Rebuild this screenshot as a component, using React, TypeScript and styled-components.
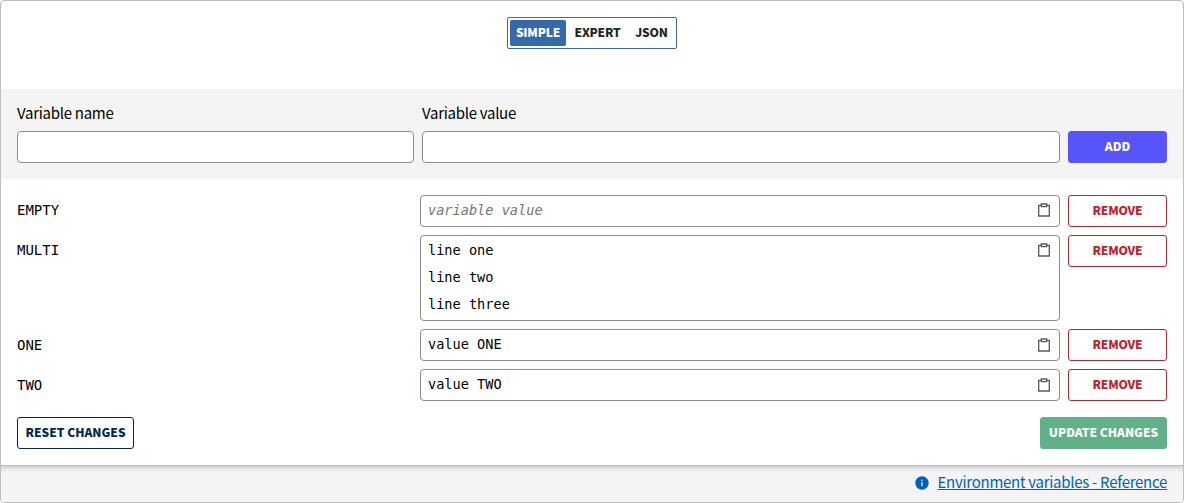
import React from "react";
import styled, { createGlobalStyle, css } from "styled-components";
import { RiClipboardLine, RiInformationFill } from "react-icons/ri";

const GlobalStyle = createGlobalStyle`
  *, *::before, *::after { box-sizing: border-box; }
  body {
    margin: 0;
    background: #fff;
    color: #000;
    font-family: "Noto Sans CJK JP", sans-serif;
    font-size: 15px;
    letter-spacing: -0.28px;
    line-height: 24px;
  }
`;

const Card = styled.section`
  display: flex;
  flex-direction: column;
  height: 503px;
  border: 1px solid #bfbfbf;
  border-radius: 4px;
  overflow: hidden;
  background: #fff;
`;

const Header = styled.div`
  display: flex;
  justify-content: center;
  height: 88px;
  padding-top: 16px;
`;

const Toggle = styled.div`
  display: flex;
  gap: 3px;
  height: 32px;
  width: 170px;
  padding: 2px;
  border: 1px solid #3569aa;
  border-radius: 2px;
`;

const ToggleItem = styled.button<{ $active?: boolean; $width: number }>`
  width: ${(p) => p.$width}px;
  padding: 0 0 2px;
  border: 0;
  border-radius: 2px;
  background: ${(p) => (p.$active ? "#3569aa" : "transparent")};
  color: ${(p) => (p.$active ? "#fff" : "#262626")};
  font: 900 12px/24px "Noto Sans CJK JP", sans-serif;
  letter-spacing: -0.2px;
  white-space: nowrap;
`;

const CreateForm = styled.div`
  display: flex;
  align-items: flex-end;
  gap: 8px;
  height: 90px;
  padding: 0 16px 16px;
  background: #f4f4f4;
`;

const Field = styled.label<{ $width: number }>`
  display: flex;
  flex-direction: column;
  gap: 6px;
  width: ${(p) => p.$width}px;
`;

const boxed = css`
  border: 1px solid #8c8c8c;
  border-radius: 4px;
  background: #fff;
`;

const TextInput = styled.input`
  ${boxed}
  width: 100%;
  height: 32px;
  padding: 0 8px;
`;

const tones = {
  primary: { bg: "#5754fb", fg: "#fff", border: "#5754fb", spacing: 0 },
  danger: { bg: "#fff", fg: "#be242d", border: "#be242d", spacing: -0.2 },
  neutral: { bg: "#fff", fg: "#012a51", border: "#012a51", spacing: 0 },
  success: { bg: "#60b187", fg: "#fff", border: "#60b187", spacing: 0 },
};

const Button = styled.button<{ $tone: keyof typeof tones; $width: number }>`
  flex: none;
  width: ${(p) => p.$width}px;
  height: 32px;
  padding: 0 0 2px;
  border: 1px solid ${(p) => tones[p.$tone].border};
  border-radius: 3px;
  background: ${(p) => tones[p.$tone].bg};
  color: ${(p) => tones[p.$tone].fg};
  font: 900 12px/28px "Noto Sans CJK JP", sans-serif;
  letter-spacing: ${(p) => tones[p.$tone].spacing}px;
  white-space: nowrap;
`;

const List = styled.div`
  display: flex;
  flex-direction: column;
  gap: 8px;
  padding: 16px 16px 0;
`;

const Row = styled.div`
  display: flex;
  align-items: flex-start;
  gap: 8px;
`;

const Name = styled.span`
  width: 395px;
  padding-top: 0.3px;
  font: 14px/31px "DejaVu Sans Mono", monospace;
  letter-spacing: 0;
`;

const ValueBox = styled.div`
  ${boxed}
  display: flex;
  width: 640px;
  padding-right: 7px;
`;

const ValueText = styled.textarea<{ $lines: number }>`
  flex: 1;
  display: block;
  height: ${(p) => (p.$lines - 1) * 27.2 + 30}px;
  margin: 0;
  padding: 1px 0 0 7px;
  border: 0;
  outline: 0;
  resize: none;
  overflow: hidden;
  background: transparent;
  color: #000;
  font: 13.6px/27px "DejaVu Sans Mono", monospace;
  letter-spacing: 0;

  &::placeholder {
    color: #757575;
    font-style: italic;
  }
`;

const CopyIcon = styled(RiClipboardLine)`
  flex: none;
  width: 16px;
  height: 16px;
  margin-top: 6.2px;
  color: #595959;
`;

const Actions = styled.div`
  display: flex;
  justify-content: space-between;
  padding: 15.6px 16px 0;
`;

const Footer = styled.footer`
  display: flex;
  align-items: center;
  justify-content: flex-end;
  gap: 8px;
  height: 37px;
  margin-top: auto;
  padding: 0 16px 2px;
  background: #f4f4f4;
  box-shadow: inset 0 6px 6px -6px #a4a4a4;
  border-top: 1px solid #bfbfbf;
  color: #0061bd;
`;

const DocLink = styled.a`
  margin-bottom: 2px;
  color: #0061bd;
  text-decoration: underline;
`;

const variables = [
  { name: "EMPTY", value: "" },
  { name: "MULTI", value: "line one\nline two\nline three" },
  { name: "ONE", value: "value ONE" },
  { name: "TWO", value: "value TWO" },
];

export default function App() {
  return (
    <>
      <GlobalStyle />
      <Card>
        <Header>
          <Toggle>
            <ToggleItem $active $width={56}>SIMPLE</ToggleItem>
            <ToggleItem $width={57}>EXPERT</ToggleItem>
            <ToggleItem $width={45}>JSON</ToggleItem>
          </Toggle>
        </Header>
        <CreateForm>
          <Field $width={397}>
            Variable name
            <TextInput />
          </Field>
          <Field $width={638}>
            Variable value
            <TextInput />
          </Field>
          <Button $tone="primary" $width={99}>ADD</Button>
        </CreateForm>
        <List>
          {variables.map(({ name, value }) => (
            <Row key={name}>
              <Name>{name}</Name>
              <ValueBox>
                <ValueText
                  $lines={value.split("\n").length}
                  defaultValue={value}
                  placeholder="variable value"
                  spellCheck={false}
                />
                <CopyIcon />
              </ValueBox>
              <Button $tone="danger" $width={99}>REMOVE</Button>
            </Row>
          ))}
        </List>
        <Actions>
          <Button $tone="neutral" $width={117}>RESET CHANGES</Button>
          <Button $tone="success" $width={127}>UPDATE CHANGES</Button>
        </Actions>
        <Footer>
          <RiInformationFill size={16} />
          <DocLink href="#">Environment variables - Reference</DocLink>
        </Footer>
      </Card>
    </>
  );
}
